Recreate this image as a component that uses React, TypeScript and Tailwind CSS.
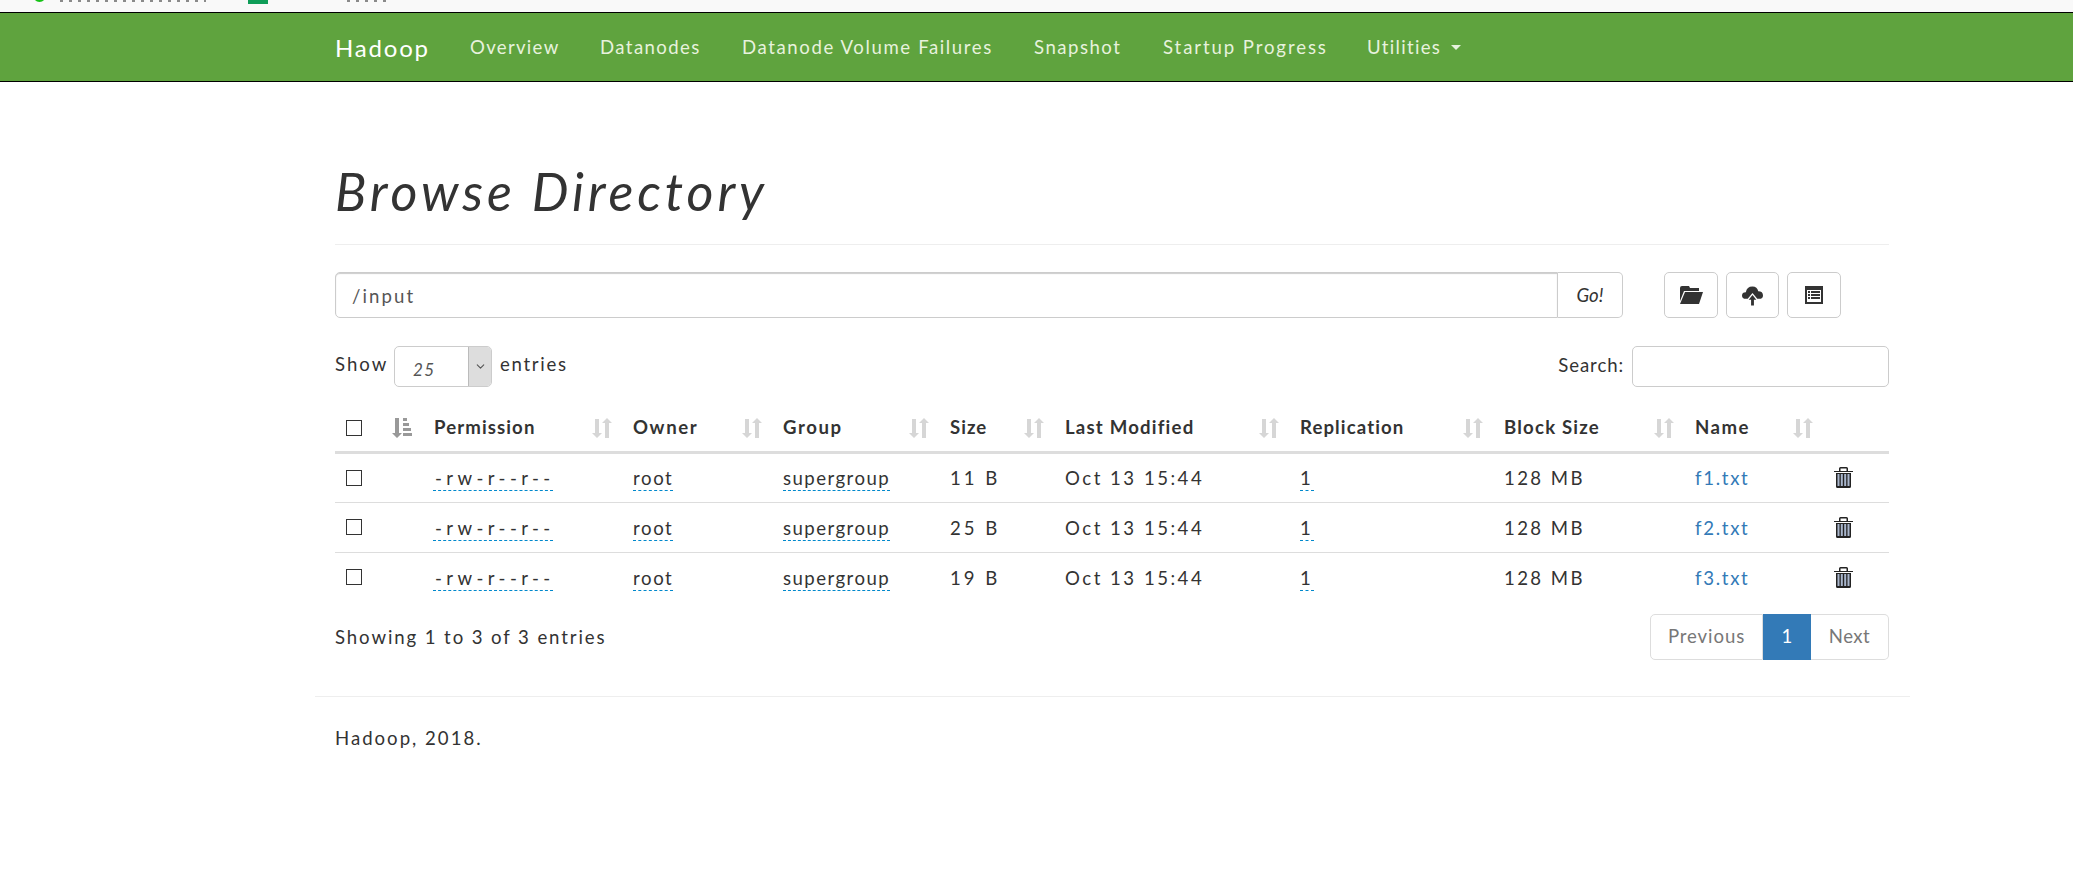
import { ChevronDown } from "lucide-react";

const NAV = [
  { label: "Overview", cls: "w-[89px] tracking-[1.3px]" },
  { label: "Datanodes", cls: "w-[101px] tracking-[1.4px]" },
  { label: "Datanode Volume Failures", cls: "w-[251px] tracking-[1.6px]" },
  { label: "Snapshot", cls: "w-[88px] tracking-[1.5px]" },
  { label: "Startup Progress", cls: "w-[164px] tracking-[1.9px]" },
];

const COLS = [
  { label: "Permission", cls: "w-[199px] tracking-[1.1px]" },
  { label: "Owner", cls: "w-[150px] tracking-[1.6px]" },
  { label: "Group", cls: "w-[167px] tracking-[1.6px]" },
  { label: "Size", cls: "w-[115px] tracking-[1px]" },
  { label: "Last Modified", cls: "w-[235px] tracking-[1.2px]" },
  { label: "Replication", cls: "w-[204px] tracking-[1.1px]" },
  { label: "Block Size", cls: "w-[191px] tracking-[1.2px]" },
  { label: "Name", cls: "w-[139px] tracking-[1.5px]" },
];

const FILES = [
  { size: "11 B", name: "f1.txt" },
  { size: "25 B", name: "f2.txt" },
  { size: "19 B", name: "f3.txt" },
];

function SortIcon() {
  return (
    <svg viewBox="0 0 20 20" className="h-5 w-5 shrink-0 fill-[#d6d6d6]">
      <path d="M3 1h4v14h3l-5 5-5-5h3z" />
      <path d="M13 20h4V5h3l-5-5-5 5h3z" />
    </svg>
  );
}

function SortActiveIcon() {
  return (
    <svg viewBox="0 0 20 20" className="h-5 w-5 shrink-0 fill-[#999]">
      <path d="M3 0h4v15h3l-5 5-5-5h3z" />
      <path d="M11 0h4v3h-4zM11 5h6v3h-6zM11 10h8v3h-8zM11 15h9v3h-9z" />
    </svg>
  );
}

function TrashIcon() {
  return (
    <svg viewBox="0 0 19 21" className="h-[21px] w-[19px]">
      <path className="fill-[#222]" d="M5 4V1.500Q5 0 6.500 0h6Q14 0 14 1.500V4h5v1H0V4zM6.500 1.500V4h6V1.500zM2 6h15v13.500q0 1.500-1.500 1.500h-12Q2 21 2 19.500z" />
      <path className="fill-[#a9b6cc]" d="M3.500 7h2v12h-2zM6.800 7h2v12h-2zM10.200 7h2v12h-2zM13.500 7h2v12h-2z" />
    </svg>
  );
}

function Cell({ text, cls }: { text: string; cls?: string }) {
  return (
    <span className={"inline-block border-b border-dashed border-[#0088cc] leading-[24px] whitespace-nowrap " + (cls ?? "")}>
      {text}
    </span>
  );
}

export default function App() {
  return (
    <div className="min-h-screen bg-white font-['Lato',sans-serif] text-[18.6px] text-[#333]">
      {/* bookmarks bar, only its lower edge is in the picture */}
      <div className="flex h-3 items-start overflow-hidden bg-[#f9f9f9]">
        <span className="ml-[33px] -mt-[11px] h-[13px] w-[13px] rounded-full bg-[#16c216]" />
        <span className="ml-[14px] h-[2px] w-[146px] bg-[repeating-linear-gradient(90deg,#8a8a8a_0_3px,transparent_3px_9px)]" />
        <span className="ml-[42px] -mt-[8px] h-3 w-5 bg-[#0f9d58]" />
        <span className="ml-[79px] h-[2px] w-[43px] bg-[repeating-linear-gradient(90deg,#8a8a8a_0_3px,transparent_3px_9px)]" />
      </div>

      <nav className="h-[70px] border-y border-black bg-[#5fa33e]">
        <div className="ml-[335px] flex h-full items-center pt-[2px]">
          <span className="w-[94px] text-[24px] tracking-[1.8px] text-white">Hadoop</span>
          {NAV.map((n) => (
            <span key={n.label} className={"ml-[41px] whitespace-nowrap text-[#e7f2dd] " + n.cls}>
              {n.label}
            </span>
          ))}
          <span className="ml-[41px] -translate-x-[1px] flex items-center gap-[10px] tracking-[1.3px] text-[#e7f2dd]">
            Utilities
            <span className="h-0 w-0 border-x-[5px] border-t-[5px] border-x-transparent border-t-[#e7f2dd]" />
          </span>
        </div>
      </nav>

      <main className="ml-[315px] w-[1595px]">
        <div className="pr-[21px] pl-5">
          <div className="border-b border-[#eee] pt-[75px] pb-[19px]">
            <h1 className="text-[52px] leading-[68px] tracking-[3.9px] italic">Browse Directory</h1>
          </div>

          <div className="mt-[27px] flex h-[46px]">
            <div className="flex w-[1223px] items-center rounded-l-[5px] border border-[#ccc] pt-[3px] pl-4 tracking-[2.1px] text-[#555] shadow-[inset_0_1px_1px_rgba(0,0,0,0.2)]">
              /input
            </div>
            <button className="w-[65px] rounded-r-[5px] border border-l-0 border-[#ccc] pt-[2px] italic">Go!</button>
            <div className="ml-[41px] flex gap-2">
              <button className="flex w-[54px] items-center justify-center rounded-[5px] border border-[#ccc]">
                <svg viewBox="0 0 24 18" className="h-[18px] w-6 fill-[#333]">
                  <path d="M3 0h7l1 2h9v3H5L1 15V2q0-2 2-2z" />
                  <path d="M6 6h18l-4 12H1z" />
                </svg>
              </button>
              <button className="flex w-[53px] items-center justify-center rounded-[5px] border border-[#ccc]">
                <svg viewBox="0 0 22 21" className="h-[21px] w-[21px] fill-[#333]">
                  <path d="M4 14Q0 14 0 10.500 0 7 4 7 5 1 11 1q5 0 6 5 5 0 5 4.500 0 3.500-4 3.500h-2L11 8l-5 6z" />
                  <path d="M11 10l4 5h-2.500v6h-3v-6H7z" />
                </svg>
              </button>
              <button className="flex w-[54px] items-center justify-center rounded-[5px] border border-[#ccc]">
                <svg viewBox="0 0 18 18" className="h-[18px] w-[18px] fill-[#333]">
                  <path fillRule="evenodd" d="M0 0h18v18H0zM2 4v12h14V4z" />
                  <path d="M3 5h2v2H3zM6 5h9v2H6zM3 8h2v2H3zM6 8h9v2H6zM3 11h2v2H3zM6 11h9v2H6z" />
                </svg>
              </button>
            </div>
          </div>

          <div className="mt-[28px] flex h-[41px] items-center justify-between">
            <div className="flex items-center">
              <span className="w-[59px] pb-[4px] tracking-[2px]">Show</span>
              <div className="flex h-[41px] w-[98px] overflow-hidden rounded-[5px] border border-[#ccc]">
                <span className="flex-1 pt-[10px] pl-[18px] text-[17px] tracking-[1.5px] text-[#555] italic">25</span>
                <span className="flex w-[23px] items-center justify-center border-l border-[#bbb] bg-[#ddd]">
                  <ChevronDown size={13} className="text-[#555]" />
                </span>
              </div>
              <span className="ml-2 pb-[4px] tracking-[1.7px]">entries</span>
            </div>
            <div className="flex items-center gap-2">
              <span className="pb-[2px] tracking-[0.9px]">Search:</span>
              <input className="h-[41px] w-[257px] rounded-[5px] border border-[#ccc] outline-none" />
            </div>
          </div>

          <table className="mt-[18px] w-[1554px] table-fixed border-collapse">
            <thead>
              <tr className="h-[47px] border-b-[3px] border-[#ddd]">
                <th className="w-[46px] pl-[11px] text-left">
                  <input type="checkbox" className="block h-4 w-4 appearance-none border border-[#333]" />
                </th>
                <th className="w-[42px] pl-[11px] text-left">
                  <SortActiveIcon />
                </th>
                {COLS.map((c) => (
                  <th key={c.label} className={"pr-[10px] pl-[11px] text-left font-bold " + c.cls}>
                    <div className="flex items-center justify-between">
                      <span className="whitespace-nowrap">{c.label}</span>
                      <SortIcon />
                    </div>
                  </th>
                ))}
                <th />
              </tr>
            </thead>
            <tbody>
              {FILES.map((f, i) => (
                <tr key={f.name} className={"h-[50px] " + (i < 2 ? "border-b border-[#ddd]" : "")}>
                  <td className="pl-[11px]">
                    <input type="checkbox" className="block h-4 w-4 appearance-none border border-[#333]" />
                  </td>
                  <td />
                  <td className="pt-[3px] pl-[10px]">
                    <Cell text="-rw-r--r--" cls="w-[120px] pl-[2px] tracking-[4.400px]" />
                  </td>
                  <td className="pt-[3px] pl-[11px]">
                    <Cell text="root" cls="tracking-[1.6px]" />
                  </td>
                  <td className="pt-[3px] pl-[11px]">
                    <Cell text="supergroup" cls="tracking-[1.45px]" />
                  </td>
                  <td className="pt-[3px] pl-[11px] tracking-[3px]">{f.size}</td>
                  <td className="pt-[3px] pl-[11px] tracking-[2.5px] whitespace-nowrap">Oct 13 15:44</td>
                  <td className="pt-[3px] pl-[11px]">
                    <Cell text="1" cls="w-[14px]" />
                  </td>
                  <td className="pt-[3px] pl-[11px] tracking-[2.4px]">128 MB</td>
                  <td className="pt-[3px] pl-[11px] tracking-[1.7px] text-[#337ab7]">{f.name}</td>
                  <td className="pl-[11px]">
                    <TrashIcon />
                  </td>
                </tr>
              ))}
            </tbody>
          </table>

          <div className="mt-[12px] flex items-start justify-between">
            <span className="mt-[10px] tracking-[1.9px]">Showing 1 to 3 of 3 entries</span>
            <div className="flex h-[46px] text-[#777]">
              <span className="flex w-[113px] items-center justify-center rounded-l-[5px] border border-[#ddd] tracking-[0.9px]">
                Previous
              </span>
              <span className="flex w-[48px] items-center justify-center bg-[#337ab7] text-white">1</span>
              <span className="flex w-[78px] items-center justify-center rounded-r-[5px] border border-l-0 border-[#ddd] tracking-[0.5px]">
                Next
              </span>
            </div>
          </div>
        </div>

        <footer className="mt-[36px] border-t border-[#eee] px-5 pt-[28px]">
          <p className="tracking-[2px]">Hadoop, 2018.</p>
        </footer>
      </main>
    </div>
  );
}
